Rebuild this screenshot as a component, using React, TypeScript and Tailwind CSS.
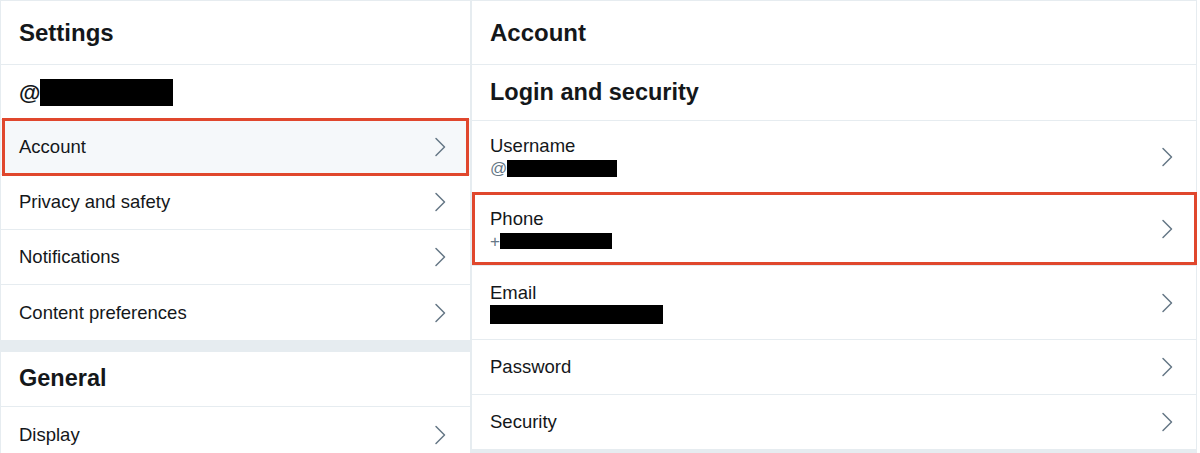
import React from "react";

const Chevron = () => (
  <svg width="12" height="20" viewBox="0 0 12 20" fill="none" className="shrink-0">
    <polyline points="2,1.5 10.5,10 2,18.5" stroke="#657786" strokeWidth="1.5" strokeLinecap="round" strokeLinejoin="round" />
  </svg>
);

const Redact = ({ w, h }: { w: number; h: number }) => (
  <span className="inline-block bg-black align-middle" style={{ width: w, height: h }} />
);

function NavRow({ label, active, last }: { label: string; active?: boolean; last?: boolean }) {
  return (
    <div
      className={`relative flex items-center justify-between h-[55px] pl-[18px] pr-[24px] ${last ? "" : "border-b border-[#e6ecf0]"} ${active ? "bg-[#f5f8fa]" : ""}`}
    >
      <span className="text-[18.5px] text-[#14171a]">{label}</span>
      <Chevron />
      {active && (
        <div className="absolute -top-[2px] -bottom-[2px] left-[1px] right-[1px] border-[3px] border-[#e0472d]" />
      )}
    </div>
  );
}

function AccountRow({
  label,
  sub,
  h,
  boxed,
  last,
}: {
  label: string;
  sub?: React.ReactNode;
  h: string;
  boxed?: boolean;
  last?: boolean;
}) {
  return (
    <div className={`relative flex items-center justify-between ${h} pl-[18px] pr-[23px] ${last ? "" : "border-b border-[#e6ecf0]"}`}>
      <div className="flex flex-col">
        <span className="text-[18.5px] leading-[24px] text-[#14171a]">{label}</span>
        {sub && <span className="text-[17px] leading-[21px] text-[#657786] flex items-center">{sub}</span>}
      </div>
      <Chevron />
      {boxed && <div className="absolute -top-[1px] bottom-0 left-0 -right-[1px] border-[3px] border-[#e0472d]" />}
    </div>
  );
}

export default function App() {
  return (
    <div className="w-[1200px] h-[453px] overflow-hidden bg-white font-['Liberation_Sans',Arial,sans-serif]">
      <div className="flex w-[1197px] border-t border-[#e6ecf0]">
        {/* Left column */}
        <div className="w-[471px] border-l border-r border-[#e6ecf0] flex flex-col">
          <div className="h-[64px] flex items-center pl-[18px] border-b border-[#e6ecf0]">
            <h1 className="text-[24px] font-bold text-[#14171a]">Settings</h1>
          </div>
          <div className="h-[55px] flex items-center pl-[18px] border-b border-[#e6ecf0]">
            <span className="text-[22px] font-bold text-[#14171a]">@</span>
            <Redact w={133} h={27} />
          </div>
          <NavRow label="Account" active />
          <NavRow label="Privacy and safety" />
          <NavRow label="Notifications" />
          <NavRow label="Content preferences" last />
          <div className="h-[12px] bg-[#e6ecf0]" />
          <div className="h-[55px] flex items-center pl-[18px] border-b border-[#e6ecf0]">
            <h2 className="text-[23.5px] font-bold text-[#14171a]">General</h2>
          </div>
          <NavRow label="Display" last />
        </div>

        {/* Right column */}
        <div className="w-[726px] border-l border-r border-[#e6ecf0] flex flex-col">
          <div className="h-[64px] flex items-center pl-[18px] border-b border-[#e6ecf0]">
            <h1 className="text-[24px] font-bold text-[#14171a]">Account</h1>
          </div>
          <div className="h-[56px] flex items-center pl-[18px] border-b border-[#e6ecf0]">
            <h2 className="text-[23.5px] font-bold text-[#14171a]">Login and security</h2>
          </div>
          <AccountRow
            label="Username"
            h="h-[72px]"
            sub={
              <>
                @<Redact w={110} h={17} />
              </>
            }
          />
          <AccountRow
            label="Phone"
            h="h-[73px]"
            boxed
            sub={
              <>
                +<Redact w={112} h={16} />
              </>
            }
          />
          <AccountRow label="Email" h="h-[74px]" sub={<Redact w={173} h={19} />} />
          <AccountRow label="Password" h="h-[55px]" />
          <AccountRow label="Security" h="h-[54px]" last />
          <div className="h-[6px] bg-[#e6ecf0]" />
        </div>
      </div>
    </div>
  );
}
